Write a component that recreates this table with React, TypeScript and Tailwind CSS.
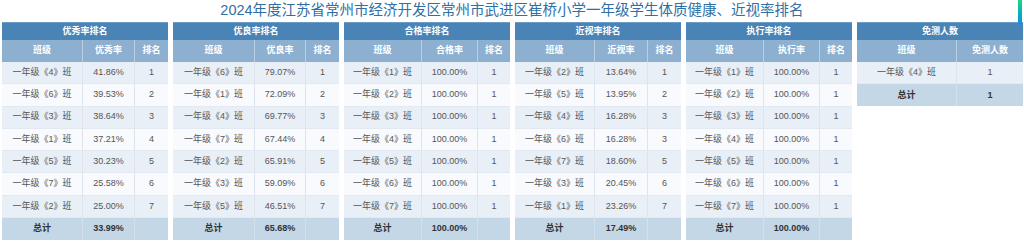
import React from 'react'

type Table = {
  title: string
  cols: string[]
  widths: string
  rows: string[][]
  total: string[]
}

const cls = (n: number) => `一年级《${n}》班`

const TABLES: Table[] = [
  {
    title: '优秀率排名',
    cols: ['班级', '优秀率', '排名'],
    widths: 'grid-cols-[81px_52px_33px]',
    rows: [
      [cls(4), '41.86%', '1'],
      [cls(6), '39.53%', '2'],
      [cls(3), '38.64%', '3'],
      [cls(1), '37.21%', '4'],
      [cls(5), '30.23%', '5'],
      [cls(7), '25.58%', '6'],
      [cls(2), '25.00%', '7'],
    ],
    total: ['总计', '33.99%', ''],
  },
  {
    title: '优良率排名',
    cols: ['班级', '优良率', '排名'],
    widths: 'grid-cols-[82px_51px_33px]',
    rows: [
      [cls(6), '79.07%', '1'],
      [cls(1), '72.09%', '2'],
      [cls(4), '69.77%', '3'],
      [cls(7), '67.44%', '4'],
      [cls(2), '65.91%', '5'],
      [cls(3), '59.09%', '6'],
      [cls(5), '46.51%', '7'],
    ],
    total: ['总计', '65.68%', ''],
  },
  {
    title: '合格率排名',
    cols: ['班级', '合格率', '排名'],
    widths: 'grid-cols-[78px_56px_32px]',
    rows: [1, 2, 3, 4, 5, 6, 7].map((n) => [cls(n), '100.00%', '1']),
    total: ['总计', '100.00%', ''],
  },
  {
    title: '近视率排名',
    cols: ['班级', '近视率', '排名'],
    widths: 'grid-cols-[80px_53px_33px]',
    rows: [
      [cls(2), '13.64%', '1'],
      [cls(5), '13.95%', '2'],
      [cls(4), '16.28%', '3'],
      [cls(6), '16.28%', '3'],
      [cls(7), '18.60%', '5'],
      [cls(3), '20.45%', '6'],
      [cls(1), '23.26%', '7'],
    ],
    total: ['总计', '17.49%', ''],
  },
  {
    title: '执行率排名',
    cols: ['班级', '执行率', '排名'],
    widths: 'grid-cols-[78px_56px_32px]',
    rows: [1, 2, 3, 4, 5, 6, 7].map((n) => [cls(n), '100.00%', '1']),
    total: ['总计', '100.00%', ''],
  },
  {
    title: '免测人数',
    cols: ['班级', '免测人数'],
    widths: 'grid-cols-[100px_66px]',
    rows: [[cls(4), '1']],
    total: ['总计', '1'],
  },
]

function RankTable({ t }: { t: Table }) {
  return (
    <div className="flex w-[166px] flex-col">
      {/* title bar */}
      <div className="flex h-[18px] items-center justify-center border-t border-[#6a9cc6] bg-[#4a83b6] text-[9px] font-bold text-white">
        {t.title}
      </div>

      {/* column heads */}
      <div className={`grid h-[22px] ${t.widths} bg-[#8db0d1] text-[9px] font-bold text-white`}>
        {t.cols.map((c, i) => (
          <div
            key={c}
            className={`flex items-center justify-center ${
              i < t.cols.length - 1 ? 'border-r border-[#b9cfe3]' : ''
            }`}
          >
            {c}
          </div>
        ))}
      </div>

      {t.rows.map((r, ri) => (
        <div
          key={ri}
          className={`grid h-[22.3px] ${t.widths} border-b border-[#e3e9f0] text-[9px] text-[#555] ${
            ri % 2 === 0 ? 'bg-[#e9eff7]' : 'bg-[#f8fafd]'
          }`}
        >
          {r.map((v, i) => (
            <div
              key={i}
              className={`flex items-center justify-center ${
                i < r.length - 1 ? 'border-r border-[#dde4ec]' : ''
              }`}
            >
              {v}
            </div>
          ))}
        </div>
      ))}

      {/* total */}
      <div className={`grid h-[22px] ${t.widths} bg-[#c4d7e7] text-[9px] font-bold text-[#333]`}>
        {t.total.map((v, i) => (
          <div
            key={i}
            className={`flex items-center justify-center ${
              i < t.total.length - 1 ? 'border-r border-[#d3e1ed]' : ''
            }`}
          >
            {v}
          </div>
        ))}
      </div>
    </div>
  )
}

export default function App() {
  return (
    <div
      className="relative h-[243px] w-[1024px] overflow-hidden bg-white"
      style={{ fontFamily: '"Liberation Sans", "Noto Sans CJK SC", sans-serif' }}
    >
      <h1 className="h-[22px] text-center text-[14.5px] leading-[20px] font-normal text-[#2f6fa6]">
        2024年度江苏省常州市经济开发区常州市武进区崔桥小学一年级学生体质健康、近视率排名
      </h1>

      <div className="flex items-start gap-[5px] pl-[2px]">
        {TABLES.map((t) => (
          <RankTable key={t.title} t={t} />
        ))}
      </div>

      {/* scroll indicator */}
      <div className="absolute top-0 right-[2px] h-[25px] w-[4px] rounded-b-sm bg-linear-to-b from-[#22d680] to-[#1e88e0]" />
    </div>
  )
}
